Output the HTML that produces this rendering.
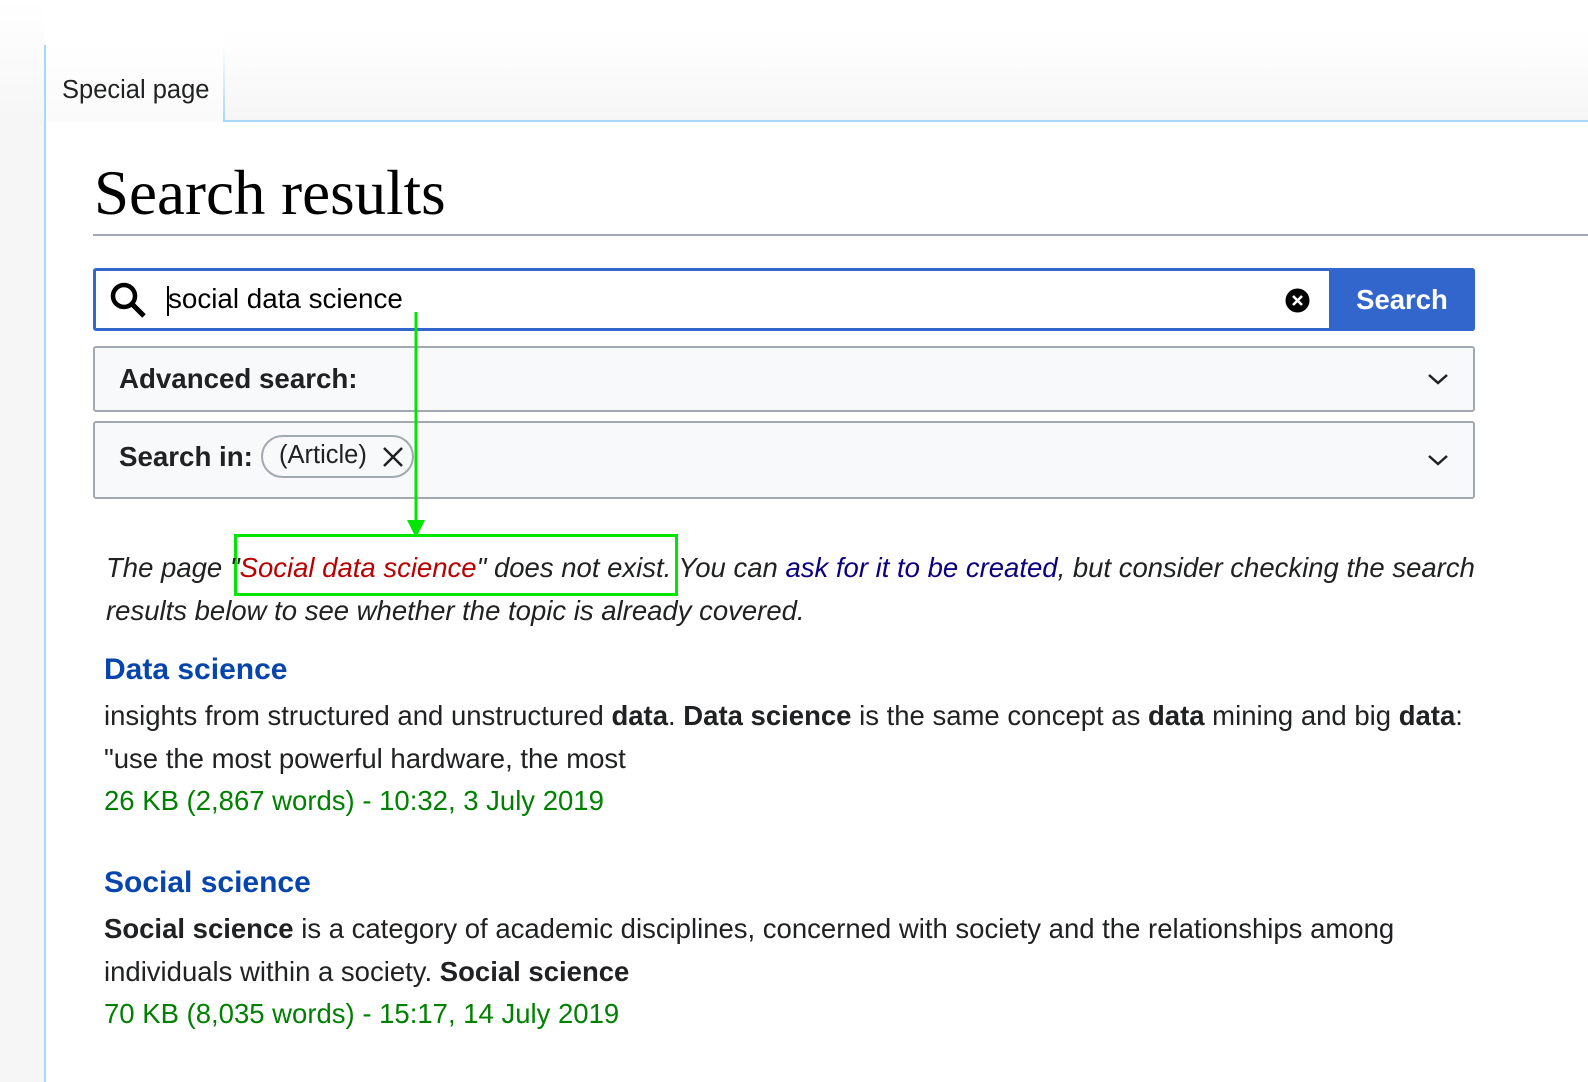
<!DOCTYPE html>
<html><head><meta charset="utf-8"><style>
*{margin:0;padding:0;box-sizing:border-box}
body{width:1588px;height:1082px;position:relative;overflow:hidden;background:#fff;font-family:"Liberation Sans",Arial,sans-serif;color:#202122}
.abs{position:absolute;white-space:nowrap}
.left{left:0;top:0;width:44px;height:1082px;background:linear-gradient(#fff 0,#f6f6f6 120px,#f6f6f6)}
.lb{left:44px;top:45px;width:2px;height:1037px;background:#a7d7f9}
.topbar{left:224px;top:0;width:1364px;height:122px;background:linear-gradient(#fff 30px,#f6f6f6 122px);border-bottom:2px solid #a7d7f9}
.tabgrad{left:46px;top:0;width:178px;height:122px;background:#fff}
.tabsep{left:223px;top:45px;width:2px;height:77px;background:linear-gradient(#fff,#a7d7f9)}
h1{position:absolute;left:94px;top:157px;font-family:"Liberation Serif",Georgia,serif;font-weight:normal;font-size:63px;color:#000}
.hr{left:93px;top:234px;width:1495px;height:2px;background:#a2a9b1}
.sbox{left:93px;top:268px;width:1382px;height:63px;border:3px solid #3366cc;border-radius:3px;background:#fff}
.btn{left:1329px;top:268px;width:146px;height:63px;background:#3366cc;border-radius:0 3px 3px 0;color:#fff;font-weight:bold;font-size:27.5px;text-align:center;line-height:63px}
.panel{border:2px solid #a2a9b1;border-radius:3px;background:#f8f9fa}
.b{font-weight:bold}
.t25{font-size:27.5px}
a{text-decoration:none}
</style></head><body>
<div class="abs left"></div>
<div class="abs topbar"></div>
<div class="abs tabgrad" style="background:linear-gradient(#fff 40px,#fafafa)"></div>
<div class="abs lb"></div>
<div class="abs tabsep"></div>
<div class="abs" style="left:62px;top:76px;font-size:25.5px;color:#202122">Special page</div>
<h1>Search results</h1>
<div class="abs hr"></div>
<div class="abs sbox"></div>
<svg class="abs" style="left:108px;top:280px" width="40" height="40" viewBox="0 0 40 40"><circle cx="16" cy="16" r="11" fill="none" stroke="#000" stroke-width="4.5"/><line x1="24" y1="24" x2="36" y2="36" stroke="#000" stroke-width="5"/></svg>
<div class="abs" style="left:167px;top:286px;width:2px;height:30px;background:#000"></div>
<div class="abs" style="left:168px;top:283px;font-size:27.8px;color:#000">social data science</div>
<svg class="abs" style="left:1285px;top:288px" width="25" height="25" viewBox="0 0 25 25"><circle cx="12.5" cy="12.5" r="12" fill="#000"/><path d="M8 8L17 17M17 8L8 17" stroke="#fff" stroke-width="2.6"/></svg>
<div class="abs btn">Search</div>
<div class="abs panel" style="left:93px;top:346px;width:1382px;height:66px"></div>
<div class="abs b" style="left:119px;top:363px;font-size:27.7px">Advanced search:</div>
<svg class="abs" style="left:1426px;top:371px" width="24" height="16" viewBox="0 0 24 16"><path d="M3 4L12 12L21 4" fill="none" stroke="#202122" stroke-width="2.5"/></svg>
<div class="abs panel" style="left:93px;top:421px;width:1382px;height:78px"></div>
<svg class="abs" style="left:1426px;top:452px" width="24" height="16" viewBox="0 0 24 16"><path d="M3 4L12 12L21 4" fill="none" stroke="#202122" stroke-width="2.5"/></svg>
<div class="abs b" style="left:119px;top:441px;font-size:27.7px">Search in:</div>
<div class="abs" style="left:261px;top:435px;width:153px;height:43px;border:2px solid #a2a9b1;border-radius:22px;background:#f8f9fa"></div>
<div class="abs" style="left:279px;top:441px;font-size:25.5px">(Article)</div>
<svg class="abs" style="left:381px;top:445px" width="24" height="24" viewBox="0 0 24 24"><path d="M3 3L21 21M21 3L3 21" stroke="#202122" stroke-width="2.5"/></svg>
<svg class="abs" style="left:405px;top:312px" width="22" height="230" viewBox="0 0 22 230"><line x1="11" y1="0" x2="11" y2="215" stroke="#00e600" stroke-width="3"/><path d="M2 208L11 226L20 208Z" fill="#00e600"/></svg>
<div class="abs" style="left:234px;top:534px;width:444px;height:62px;border:3px solid #00e600"></div>
<div class="abs t25" style="left:106px;top:552px;font-style:italic">The page "<span style="color:#ba0000">Social data science</span>" does not exist. You can <a style="color:#0b0080">ask for it to be created</a>, but consider checking the search</div>
<div class="abs t25" style="left:106px;top:595px;font-style:italic">results below to see whether the topic is already covered.</div>
<div class="abs b" style="left:104px;top:653px;font-size:30px;color:#0645ad">Data science</div>
<div class="abs t25" style="left:104px;top:700px">insights from structured and unstructured <b>data</b>. <b>Data science</b> is the same concept as <b>data</b> mining and big <b>data</b>:</div>
<div class="abs t25" style="left:104px;top:743px">"use the most powerful hardware, the most</div>
<div class="abs t25" style="left:104px;top:785px;color:#008000">26 KB (2,867 words) - 10:32, 3 July 2019</div>
<div class="abs b" style="left:104px;top:866px;font-size:30px;color:#0645ad">Social science</div>
<div class="abs t25" style="left:104px;top:913px"><b>Social science</b> is a category of academic disciplines, concerned with society and the relationships among</div>
<div class="abs t25" style="left:104px;top:956px">individuals within a society. <b>Social science</b></div>
<div class="abs t25" style="left:104px;top:998px;color:#008000">70 KB (8,035 words) - 15:17, 14 July 2019</div>
</body></html>
